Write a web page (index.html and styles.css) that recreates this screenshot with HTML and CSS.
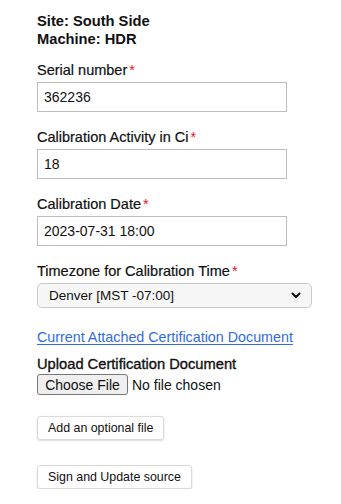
FILE: index.html
```html
<!DOCTYPE html>
<html lang="en">
<head>
<meta charset="utf-8">
<title>Update source</title>
<link rel="stylesheet" href="styles.css">
</head>
<body>
<main class="page">
  <div class="heading">
    <div>Site: South Side</div>
    <div>Machine: HDR</div>
  </div>

  <div class="field">
    <label class="label" for="serial">Serial number<span class="req">*</span></label>
    <input class="text-input" id="serial" type="text" value="362236">
  </div>

  <div class="field">
    <label class="label" for="activity">Calibration Activity in Ci<span class="req">*</span></label>
    <input class="text-input" id="activity" type="text" value="18">
  </div>

  <div class="field">
    <label class="label" for="date">Calibration Date<span class="req">*</span></label>
    <input class="text-input" id="date" type="text" value="2023-07-31 18:00">
  </div>

  <div class="field field-select">
    <label class="label" for="tz">Timezone for Calibration Time<span class="req">*</span></label>
    <div class="select-wrap">
      <select class="select" id="tz">
        <option>Denver [MST -07:00]</option>
      </select>
      <svg class="chevron" width="10" height="7" viewBox="0 0 10 7" aria-hidden="true">
        <path d="M1.5 1.5 L5 5 L8.5 1.5" fill="none" stroke="#111" stroke-width="2" stroke-linecap="round" stroke-linejoin="round"/>
      </svg>
    </div>
  </div>

  <a class="doc-link" href="#">Current Attached Certification Document</a>

  <div class="upload">
    <div class="label upload-label">Upload Certification Document</div>
    <div class="file-row">
      <span class="file-btn">Choose File</span>
      <span class="file-name">No file chosen</span>
    </div>
  </div>

  <button class="btn btn-add" type="button">Add an optional file</button>
  <button class="btn btn-sign" type="button">Sign and Update source</button>
</main>
</body>
</html>
```

FILE: styles.css
```css
html, body {
  margin: 0;
  padding: 0;
  background: #fff;
}

body {
  font-family: "Liberation Sans", Arial, Helvetica, sans-serif;
  font-size: 14px;
  color: #111;
}

.page {
  display: flex;
  flex-direction: column;
  align-items: flex-start;
  padding: 12px 0 0 37px;
}

.heading {
  font-weight: bold;
  font-size: 14.7px;
  line-height: 18px;
  margin-bottom: 14px;
}

.field {
  display: flex;
  flex-direction: column;
  margin-bottom: 17px;
}

.label {
  display: block;
  line-height: 17px;
  margin-bottom: 3px;
  font-size: 14.5px;
  -webkit-text-stroke: 0.2px #111;
}

.req {
  color: #e8141c;
  margin-left: 2px;
  -webkit-text-stroke: 0;
}

.text-input {
  box-sizing: border-box;
  width: 250px;
  height: 30px;
  margin: 0;
  border: 1px solid #bdbdbd;
  border-radius: 0;
  padding: 0 6px;
  font-family: inherit;
  font-size: 14px;
  color: #111;
  background: #fff;
  outline: none;
}

.field-select {
  margin-bottom: 21px;
}

.select-wrap {
  position: relative;
  width: 275px;
}

.select {
  appearance: none;
  -webkit-appearance: none;
  box-sizing: border-box;
  width: 275px;
  height: 25px;
  margin: 0;
  border: 1px solid #cacaca;
  border-radius: 5px;
  background: #f6f6f6;
  padding: 0 24px 0 11px;
  font-family: inherit;
  font-size: 13.5px;
  color: #111;
}

.chevron {
  position: absolute;
  right: 11px;
  top: 9px;
}

.doc-link {
  color: #2f6be6;
  text-decoration: underline;
  text-underline-offset: 2px;
  line-height: 17px;
  font-size: 14.3px;
  margin-bottom: 10px;
}

.upload .upload-label {
  margin-bottom: 1px;
  font-size: 14.7px;
  -webkit-text-stroke: 0.35px #111;
}

.file-row {
  display: flex;
  align-items: center;
  gap: 4px;
}

.file-btn {
  box-sizing: border-box;
  height: 21px;
  width: 91px;
  display: flex;
  align-items: center;
  justify-content: center;
  background: #efefef;
  border: 1px solid #767676;
  border-radius: 3px;
  font-size: 14px;
  color: #111;
}

.file-name {
  font-size: 14px;
  color: #111;
}

.btn {
  box-sizing: border-box;
  height: 24px;
  padding: 0 10px;
  margin: 0;
  background: #fff;
  border: 1px solid #dadada;
  border-radius: 3px;
  box-shadow: 0 1px 2px rgba(0, 0, 0, 0.15);
  font-family: inherit;
  font-size: 12.4px;
  color: #111;
}

.btn-add {
  margin-top: 21px;
}

.btn-sign {
  margin-top: 25px;
}
```
